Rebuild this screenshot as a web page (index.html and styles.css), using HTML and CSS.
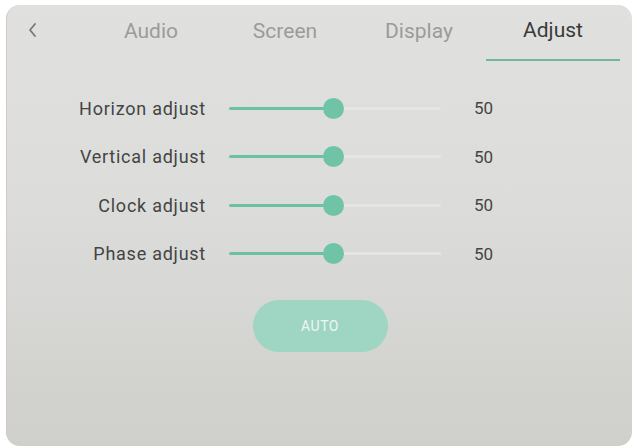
FILE: index.html
```html
<!DOCTYPE html>
<html>
<head>
<meta charset="utf-8">
<link rel="stylesheet" href="styles.css">
</head>
<body>
<div class="panel">
  <div class="tabbar">
    <div class="back">
      <svg width="10" height="16" viewBox="0 0 10 16"><path d="M8 2 L3 8 L8 14" fill="none" stroke="#777" stroke-width="1.8" stroke-linecap="round" stroke-linejoin="round"/></svg>
    </div>
    <div class="tab">Audio</div>
    <div class="tab">Screen</div>
    <div class="tab">Display</div>
    <div class="tab active">Adjust</div>
  </div>
  <div class="rows">
    <div class="row">
      <div class="label">Horizon adjust</div>
      <div class="slider"><div class="fill"></div><div class="thumb"></div></div>
      <div class="value">50</div>
    </div>
    <div class="row">
      <div class="label">Vertical adjust</div>
      <div class="slider"><div class="fill"></div><div class="thumb"></div></div>
      <div class="value">50</div>
    </div>
    <div class="row">
      <div class="label">Clock adjust</div>
      <div class="slider"><div class="fill"></div><div class="thumb"></div></div>
      <div class="value">50</div>
    </div>
    <div class="row">
      <div class="label">Phase adjust</div>
      <div class="slider"><div class="fill"></div><div class="thumb"></div></div>
      <div class="value">50</div>
    </div>
  </div>
  <div class="actions">
    <div class="auto">AUTO</div>
  </div>
</div>
</body>
</html>
```
FILE: styles.css
```css
html, body {
  margin: 0;
  padding: 0;
  background: #ffffff;
}
body {
  width: 637px;
  height: 448px;
  overflow: hidden;
  font-family: Roboto, "Liberation Sans", sans-serif;
}
.panel {
  margin: 5px 5px 0 6px;
  width: 626px;
  height: 441px;
  box-sizing: border-box;
  border-radius: 14px;
  background: linear-gradient(180deg, #e0e1de 0%, #dcdddA 45%, #cfd0cc 100%);
  border-left: 1px solid #d6c6c8;
  display: flex;
  flex-direction: column;
}
.tabbar {
  display: flex;
  align-items: stretch;
  height: 56px;
}
.back {
  width: 77px;
  display: flex;
  align-items: center;
  padding-left: 20px;
  padding-bottom: 6px;
  box-sizing: border-box;
}
.tab {
  width: 134px;
  display: flex;
  align-items: center;
  justify-content: center;
  font-size: 21px;
  color: #9a9c9a;
  box-sizing: border-box;
  padding-bottom: 5px;
}
.tab.active {
  color: #3a3a3a;
  border-bottom: 2px solid #6db79d;
}
.rows {
  display: flex;
  flex-direction: column;
  padding-top: 35px;
  gap: 24.5px;
}
.row {
  display: flex;
  align-items: center;
  height: 24px;
}
.label {
  width: 199px;
  text-align: right;
  font-size: 18px;
  letter-spacing: 0.75px;
  color: #444;
}
.slider {
  position: relative;
  margin-left: 23px;
  width: 212px;
  height: 3px;
  background: #e4e6e3;
  border-radius: 2px;
}
.fill {
  width: 104px;
  height: 100%;
  background: #6cc1a5;
  border-radius: 2px;
}
.thumb {
  position: absolute;
  left: 94px;
  top: -9px;
  width: 21px;
  height: 21px;
  border-radius: 50%;
  background: #6fc3a7;
}
.value {
  margin-left: 33px;
  font-size: 17px;
  color: #444;
}
.actions {
  display: flex;
  justify-content: center;
  padding-top: 34px;
}
.auto {
  width: 135px;
  height: 52px;
  border-radius: 26px;
  background: #9fd5c3;
  color: #eef7f3;
  font-size: 14px;
  display: flex;
  align-items: center;
  justify-content: center;
  letter-spacing: 0.5px;
  margin-left: 1px;
}
```
